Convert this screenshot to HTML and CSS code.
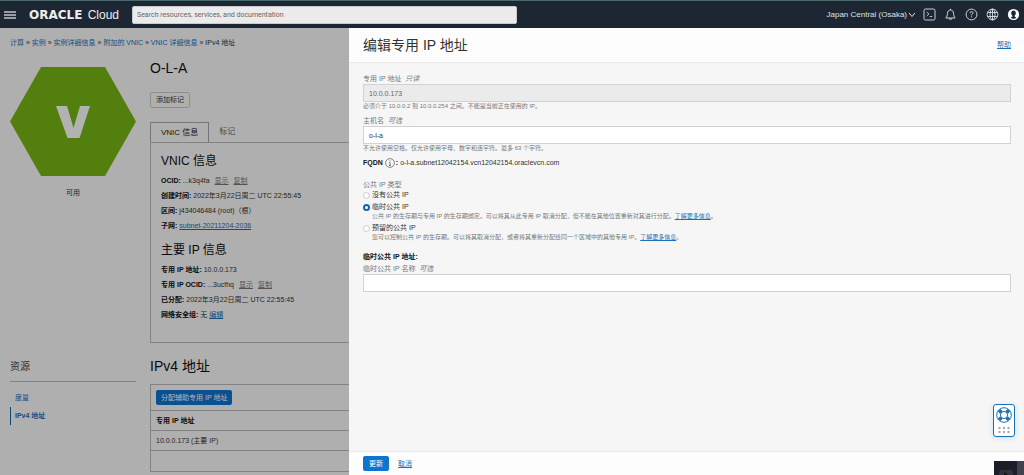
FILE: index.html
```html
<!DOCTYPE html>
<html lang="zh-CN">
<head>
<meta charset="utf-8">
<title>编辑专用 IP 地址</title>
<link rel="stylesheet" href="styles.css">
</head>
<body>
<header class="topbar">
  <button class="icon-btn menu-btn" aria-label="菜单"><svg width="12" height="8" viewBox="0 0 12 8"><path d="M0 1h12M0 4h12M0 7h12" stroke="#c3c6c9" stroke-width="1.4"/></svg></button>
  <a class="brand" href="#"><b class="brand-name">ORACLE</b><span>Cloud</span></a>
  <input class="search" type="search" placeholder="Search resources, services, and documentation" aria-label="Search">
  <nav class="tools">
    <button class="region">Japan Central (Osaka)<svg width="8" height="6" viewBox="0 0 8 6"><path d="M1 1l3 3.5L7 1" fill="none" stroke="currentColor"/></svg></button>
    <button class="icon-btn" aria-label="Cloud Shell"><svg width="13" height="13" viewBox="0 0 13 13" fill="none" stroke="currentColor"><rect x="1" y="1" width="11" height="11" rx="1.5" stroke-width=".9"/><path d="M3.7 4l2.2 2-2.2 2M6.7 8.5h2.5" stroke-width=".8"/></svg></button>
    <button class="icon-btn" aria-label="通知"><svg width="13" height="13" viewBox="0 0 13 13" fill="none" stroke="currentColor" stroke-width=".9"><path d="M1.800 10h9.400C10 8.800 9.700 7.600 9.500 5.200 9.300 3 8.300 2.100 6.500 2.100S3.700 3 3.500 5.200C3.300 7.600 3 8.800 1.800 10zM6.500 2V.8M5 10.200c.2 1.800 2.800 1.800 3 0"/></svg></button>
    <button class="icon-btn" aria-label="帮助"><svg width="13" height="13" viewBox="0 0 13 13" fill="none" stroke="currentColor"><circle cx="6.500" cy="6.500" r="5.400" stroke-width=".9"/><path d="M5 5.200c0-2 3-2 3-.2 0 1.100-1.500 1.100-1.500 2.400M6.500 8.400v1"/></svg></button>
    <button class="icon-btn" aria-label="语言"><svg width="13" height="13" viewBox="0 0 13 13" fill="none" stroke="currentColor" stroke-width=".9"><circle cx="6.500" cy="6.500" r="5.400"/><ellipse cx="6.500" cy="6.500" rx="2.500" ry="5.400"/><path d="M6.500 1v11M1.700 4.500h9.600M1.700 8.500h9.600"/></svg></button>
    <button class="icon-btn" aria-label="个人资料"><svg width="13" height="13" viewBox="0 0 13 13"><circle cx="6.500" cy="6.500" r="5.600" fill="#fff"/><path d="M6.500 2.600c-1.500 0-2.300 1-2.300 2.500 0 1.300.6 2.200 1.200 2.700v.6l-1.700 1c.7.900 1.600 1.300 2.800 1.300s2.100-.4 2.800-1.300l-1.700-1v-.6c.6-.5 1.200-1.400 1.200-2.700 0-1.500-.8-2.500-2.300-2.500z" fill="#1d2733"/></svg></button>
  </nav>
</header>

<main class="page">
  <nav class="crumbs"><a href="#">计算</a> » <a href="#">实例</a> » <a href="#">实例详细信息</a> » <a href="#">附加的 VNIC</a> » <a href="#">VNIC 详细信息</a> » IPv4 地址</nav>
  <div class="layout">
    <div class="status">
      <svg class="hex" viewBox="0 0 126 109"><path d="M31 0h64l31 54.500L95 109H31L0 54.500z" fill="#78b715"/><path d="M46 39h11l6.500 22L70 39h10L69.500 71H57.500z" fill="#fff"/></svg>
      <p class="state">可用</p>
    </div>
    <section>
      <h1 class="title">O-L-A</h1>
      <button class="tag-btn">添加标记</button>
      <div class="tabs"><button class="tab tab-active">VNIC 信息</button><button class="tab">标记</button></div>
      <div class="panel">
        <h2 class="subtitle">VNIC 信息</h2>
        <p class="row"><b>OCID:</b> ...k3q4fa <a class="quiet" href="#">显示</a> <a class="quiet" href="#">复制</a></p>
        <p class="row"><b>创建时间:</b> 2022年3月22日周二 UTC 22:55:45</p>
        <p class="row"><b>区间:</b> j434046484 (root)（根）</p>
        <p class="row"><b>子网:</b> <a class="underlined" href="#">subnet-20211204-2036</a></p>
        <h2 class="subtitle subtitle-next">主要 IP 信息</h2>
        <p class="row"><b>专用 IP 地址:</b> 10.0.0.173</p>
        <p class="row"><b>专用 IP OCID:</b> ...3ucfhq <a class="quiet" href="#">显示</a> <a class="quiet" href="#">复制</a></p>
        <p class="row"><b>已分配:</b> 2022年3月22日周二 UTC 22:55:45</p>
        <p class="row"><b>网络安全组:</b> 无 <a class="underlined" href="#">编辑</a></p>
      </div>
    </section>
    <aside>
      <h2 class="side-title">资源</h2>
      <nav class="side-nav"><a href="#">度量</a><a class="current" href="#">IPv4 地址</a></nav>
    </aside>
    <section>
      <h2 class="title title-list">IPv4 地址</h2>
      <div class="list">
        <div class="list-tools"><button class="primary">分配辅助专用 IP 地址</button></div>
        <table class="table">
          <thead><tr><th>专用 IP 地址</th></tr></thead>
          <tbody><tr><td>10.0.0.173 (主要 IP)</td></tr><tr><td></td></tr></tbody>
        </table>
      </div>
    </section>
  </div>
</main>
<div class="shade"></div>

<form class="drawer">
  <header class="drawer-head"><h2 class="drawer-title">编辑专用 IP 地址</h2><a class="underlined" href="#">帮助</a></header>
  <div class="drawer-body">
    <div class="field">
      <label for="ip">专用 IP 地址 <i>只读</i></label>
      <input id="ip" class="box" value="10.0.0.173" disabled>
      <p class="hint">必须介于 10.0.0.2 到 10.0.0.254 之间。不能是当前正在使用的 IP。</p>
    </div>
    <div class="field">
      <label for="host">主机名 <i>可选</i></label>
      <input id="host" class="box" value="o-l-a">
      <p class="hint">不允许使用空格。仅允许使用字母、数字和连字符。最多 63 个字符。</p>
    </div>
    <p class="fqdn"><b>FQDN</b><svg width="10" height="10" viewBox="0 0 10 10" fill="none" stroke="#555"><circle cx="5" cy="5" r="4.400" stroke-width=".7"/><path d="M5 2.300v1M4.200 4.500H5v3M4 7.500h2" stroke-width=".8"/></svg><b>:</b><span>o-l-a.subnet12042154.vcn12042154.oraclevcn.com</span></p>
    <fieldset class="choices">
      <legend>公共 IP 类型</legend>
      <label class="choice"><input type="radio" name="type">没有公共 IP</label>
      <label class="choice"><input type="radio" name="type" checked>临时公共 IP</label>
      <p class="hint choice-hint">公共 IP 的生存期与专用 IP 的生存期绑定。可以将其从此专用 IP 取消分配，但不能在其他位置重新对其进行分配。<a class="underlined" href="#">了解更多信息</a>。</p>
      <label class="choice"><input type="radio" name="type">预留的公共 IP</label>
      <p class="hint choice-hint">您可以控制公共 IP 的生存期。可以将其取消分配，或者将其重新分配给同一个区域中的其他专用 IP。<a class="underlined" href="#">了解更多信息</a>。</p>
    </fieldset>
    <h3 class="group-title">临时公共 IP 地址:</h3>
    <div class="field">
      <label for="name">临时公共 IP 名称 <i>可选</i></label>
      <input id="name" class="box">
    </div>
  </div>
  <footer class="drawer-foot"><button class="primary" type="button">更新</button><a class="underlined" href="#">取消</a></footer>
</form>

<button class="support" aria-label="支持">
  <svg width="18" height="29" viewBox="0 0 18 29" fill="none"><circle cx="9" cy="9" r="7.300" stroke="#1b6fb5"/><circle cx="9" cy="9" r="3.600" stroke="#1b6fb5"/><path d="M4.200 4.200l2.200 2.200M13.800 4.200l-2.200 2.200M4.200 13.800l2.200-2.200M13.800 13.800l-2.200-2.200" stroke="#1b6fb5" stroke-width="3.600"/><g fill="#aaa"><circle cx="4.500" cy="22" r="1.200"/><circle cx="9" cy="22" r="1.200"/><circle cx="13.500" cy="22" r="1.200"/><circle cx="4.500" cy="26" r="1.200"/><circle cx="9" cy="26" r="1.200"/><circle cx="13.500" cy="26" r="1.200"/></g></svg>
</button>
<div class="corner"><svg width="30" height="14" viewBox="0 0 30 14"><path d="M0 0h30v14H0z" fill="#1c1d28"/><path d="M23 0h7v14h-7z" fill="#42424f"/><rect x="5" y="9" width="14" height="8" rx="2" fill="#30313a"/><path d="M10 11l4 3h-4z" fill="#11121a"/></svg></div>
</body>
</html>
```
FILE: styles.css
```css
* { box-sizing: border-box; }
body {
  margin: 0;
  height: 100vh;
  overflow: hidden;
  display: flex;
  flex-direction: column;
  background: #fbfbfb;
  color: #333;
  font: 7px/10px "Liberation Sans", "Noto Sans CJK SC", sans-serif;
}
h1, h2, h3, p { margin: 0; font-weight: normal; }
button, input { font: inherit; color: inherit; margin: 0; }
button { border: 0; background: none; padding: 0; cursor: pointer; }
a { color: #1b70b8; text-decoration: none; }
.underlined { text-decoration: underline; }
svg { display: block; flex: none; }

.topbar {
  flex: none;
  height: 28px;
  display: flex;
  align-items: center;
  padding: 0 4px;
  background: #1d2733;
  border-top: 1px solid #4b6b6b;
  color: #dfe2e5;
}
.brand {
  display: flex;
  align-items: center;
  justify-content: space-between;
  width: 90px;
  margin: 0 13px;
  color: #eee;
  font-size: 12px;
  font-family: "Liberation Sans", sans-serif;
  font-weight: 300;
}
.brand-name { font: bold 12px/12px "DejaVu Sans", sans-serif; }
.search {
  flex: none;
  width: 385px;
  height: 18px;
  padding: 0 4px;
  border: 1px solid #c9cccf;
  border-radius: 2px;
  background: #ebebeb;
  color: #444;
  line-height: 16px;
}
.search::placeholder { color: #666; font-family: Roboto, sans-serif; }
.tools { margin-left: auto; display: flex; align-items: center; gap: 8px; }
.region { display: flex; align-items: center; gap: 1px; margin-right: -1px; font-size: 8px; }

.page { flex: 1; padding: 10px; overflow: hidden; }
.crumbs { margin-bottom: 10px; }
.layout { display: grid; grid-template-columns: 126px 1fr; gap: 13px 14px; }
.status { padding-top: 9px; }
.hex { width: 100%; height: auto; }
.state { margin-top: 12px; text-align: center; }
.title { font-size: 14px; line-height: 20px; color: #111; }
.title-list { margin-bottom: 8px; }
.tag-btn {
  display: block;
  height: 16px;
  margin: 14px 0;
  padding: 0 5px;
  border: 1px solid #ccc;
  border-radius: 2px;
}
.tabs { display: flex; border-bottom: 1px solid #bbb; }
.tab { height: 20px; padding: 0 10px; font-size: 8px; color: #666; }
.tab-active {
  margin-bottom: -1px;
  border: 1px solid #aaa;
  border-bottom: 0;
  background: #fbfbfb;
  color: #222;
}
.panel { padding: 9px 10px 20px; border: 1px solid #bbb; border-top: 0; }
.subtitle { margin-bottom: 3px; font-size: 12px; line-height: 18px; color: #111; }
.subtitle-next { margin-top: 8px; }
.row { line-height: 15px; }
.row b { color: #111; }
.quiet { margin-left: 3px; color: #777; text-decoration: underline; }
.side-title { padding: 1px 0 4px; border-bottom: 1px solid #bbb; font-size: 10px; line-height: 20px; color: #444; }
.side-nav { display: flex; flex-direction: column; padding-top: 7px; }
.side-nav a { padding: 0 4px; border-left: 1px solid transparent; line-height: 18px; }
.side-nav .current { border-color: #0d68b5; font-weight: bold; }
.list { border: 1px solid #bbb; }
.list-tools { padding: 5px; }
.primary {
  height: 15px;
  padding: 0 5px;
  border-radius: 2px;
  background: #0d74d0;
  color: #fff;
}
.list-tools .primary { display: block; }
.table { width: 100%; border-collapse: collapse; }
.table th, .table td { height: 20px; padding: 0 5px; border-top: 1px solid #bbb; text-align: left; }
.table th { color: #111; }

.shade { position: fixed; inset: 28px 0 0; background: rgba(0, 0, 0, 0.3); }
.drawer {
  position: fixed;
  inset: 28px 0 0 349px;
  display: flex;
  flex-direction: column;
  background: #f6f6f6;
}
.drawer-head {
  display: flex;
  align-items: center;
  justify-content: space-between;
  height: 35px;
  padding: 0 13px 0 14px;
  border-bottom: 1px solid #eaeaea;
  background: #fdfdfd;
}
.drawer-title { font-size: 14px; line-height: 20px; }
.drawer-body { flex: 1; padding: 11px 13px 0 14px; }
.field { margin-bottom: 5px; }
.field label, .choices legend { display: block; padding: 0; color: #777; }
.field i { margin-left: 2px; }
.box {
  display: block;
  width: 100%;
  height: 18px;
  padding: 0 5px;
  border: 1px solid #d2d2d2;
  background: #fff;
}
.box:disabled { background: #ebebeb; color: #666; }
.hint { font-size: 6px; line-height: 9px; color: #777; }
.fqdn { display: flex; align-items: center; gap: 2px; }
.fqdn b { color: #111; }
.fqdn svg + b { margin-left: -1px; }
.choices { margin: 12px 0 8px; padding: 0; border: 0; }
.choice { display: flex; align-items: center; gap: 2px; margin-bottom: 2px; }
.choice input {
  appearance: none;
  width: 7px;
  height: 7px;
  border: 1px solid #ccc;
  border-radius: 50%;
  background: #fff;
}
.choice input:checked { border: 2px solid #0d68b5; }
.choice:has(+ .hint) { margin-bottom: 0; }
.choice-hint { margin: 0 0 2px 9px; }
.group-title { margin-bottom: 2px; font-size: 7px; font-weight: bold; color: #111; }
.drawer-foot {
  display: flex;
  align-items: center;
  gap: 9px;
  height: 24px;
  padding: 0 14px;
  border-top: 1px solid #eaeaea;
  background: #fdfdfd;
}
.drawer-foot .primary { padding: 0 6px; }

.support {
  position: fixed;
  right: 9px;
  bottom: 38px;
  padding: 1px;
  border: 1px solid #1b6fb5;
  border-radius: 3px;
  background: #fff;
  box-shadow: 0 1px 5px #bfe0f5;
}
.corner { position: fixed; right: 0; bottom: 0; }
```
